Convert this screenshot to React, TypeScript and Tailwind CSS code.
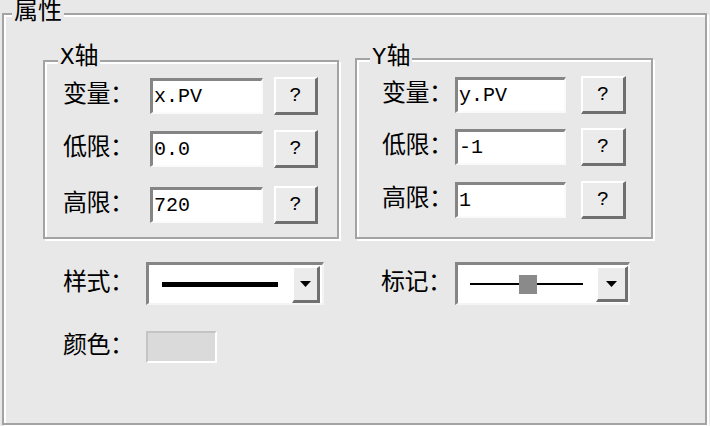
const font = "font-['Liberation_Mono','Noto_Sans_CJK_SC',monospace]";

function Etched({
  className,
  title,
  titleClass,
  children,
}: {
  className: string;
  title: string;
  titleClass: string;
  children?: React.ReactNode;
}) {
  return (
    <div
      className={`relative border-2 border-[#a3a3a3] shadow-[inset_2px_2px_0_#ffffff,2px_2px_0_#ffffff] ${className}`}
    >
      <span
        className={`absolute bg-[#e8e8e8] px-[2px] text-[24px] leading-[24px] text-black ${titleClass}`}
      >
        {title}
      </span>
      {children}
    </div>
  );
}

function Field({
  label,
  value,
  labelW,
  inputW,
  btnGap,
  btnW,
  className = "",
}: {
  label: string;
  value: string;
  labelW: string;
  inputW: string;
  btnGap: string;
  btnW: string;
  className?: string;
}) {
  return (
    <div className={`flex h-[38px] items-center ${className}`}>
      <div className={`flex shrink-0 items-center ${labelW}`}>
        <span className="text-[24px] leading-[26px] tracking-[-0.5px]">{label}</span>
      </div>
      <div
        className={`flex h-[36px] shrink-0 items-center border-t-[3px] border-l-[3px] border-b-2 border-r-2 border-t-[#858585] border-l-[#858585] border-b-[#fafafa] border-r-[#fafafa] bg-white pl-[1px] text-[20px] leading-[20px] ${inputW}`}
      >
        {value}
      </div>
      <button
        className={`flex h-[38px] shrink-0 items-center justify-center border-t-2 border-l-2 border-b-[3px] border-r-[3px] border-t-white border-l-white border-b-[#6f6f6f] border-r-[#6f6f6f] bg-[#ebebeb] text-[20px] leading-[20px] ${btnGap} ${btnW}`}
      >
        ?
      </button>
    </div>
  );
}

function DropButton({ className }: { className: string }) {
  return (
    <div
      className={`flex items-center justify-center border-t-2 border-l-2 border-b-[3px] border-r-[3px] border-t-white border-l-white border-b-[#707070] border-r-[#707070] bg-[#ebebeb] ${className}`}
    >
      <svg width="11" height="6" viewBox="0 0 11 6">
        <path d="M0 0H11L5.5 6Z" fill="#000" />
      </svg>
    </div>
  );
}

export default function App() {
  return (
    <div className={`h-[426px] w-[710px] overflow-hidden bg-[#e8e8e8] pl-[2px] pt-[13px] text-black ${font}`}>
      <Etched
        className="h-[412px] w-[705px]"
        title="属性"
        titleClass="left-[8px] top-[-15px] leading-[26px]"
      >
        <div className="flex items-end gap-[16px] pl-[39px] pt-[43px]">
          <Etched
            className="h-[179px] w-[296px] pl-[18px] pt-[15px]"
            title="X轴"
            titleClass="left-[13px] top-[-16px]"
          >
            <Field label="变量：" value="x.PV" labelW="w-[87px]" inputW="w-[113px]" btnGap="ml-[11px]" btnW="w-[44px]" />
            <Field label="低限：" value="0.0" labelW="w-[87px]" inputW="w-[113px]" btnGap="ml-[11px]" btnW="w-[44px]" className="mt-[15px]" />
            <Field label="高限：" value="720" labelW="w-[87px]" inputW="w-[113px]" btnGap="ml-[11px]" btnW="w-[44px]" className="mt-[18px]" />
          </Etched>
          <Etched
            className="h-[181px] w-[298px] pl-[25px] pt-[16px]"
            title="Y轴"
            titleClass="left-[13px] top-[-14px]"
          >
            <Field label="变量：" value="y.PV" labelW="w-[73px]" inputW="w-[111px]" btnGap="ml-[15px]" btnW="w-[45px]" />
            <Field label="低限：" value="-1" labelW="w-[73px]" inputW="w-[111px]" btnGap="ml-[15px]" btnW="w-[45px]" className="mt-[14px]" />
            <Field label="高限：" value="1" labelW="w-[73px]" inputW="w-[111px]" btnGap="ml-[15px]" btnW="w-[45px]" className="mt-[15px]" />
          </Etched>
        </div>

        <div className="flex flex-col pl-[59px] pt-[23px]">
          <div className="flex items-center">
            <span className="w-[83px] text-[24px] leading-[26px] tracking-[-0.5px]">样式：</span>
            <div className="flex h-[43px] w-[178px] items-center border-t-[3px] border-l-[3px] border-b-2 border-r-2 border-t-[#858585] border-l-[#858585] border-b-[#f4f4f4] border-r-[#f4f4f4] bg-white pl-[13px] pr-[2px]">
              <div className="h-[5px] w-[116px] bg-black" />
              <div className="flex-1" />
              <DropButton className="h-[37px] w-[28px]" />
            </div>
            <span className="ml-[57px] w-[74px] text-[24px] leading-[26px] tracking-[-0.5px]">标记：</span>
            <div className="flex h-[43px] w-[175px] items-center border-t-[3px] border-l-[3px] border-b-2 border-r-2 border-t-[#858585] border-l-[#858585] border-b-[#f4f4f4] border-r-[#f4f4f4] bg-white pl-[12px]">
              <div className="relative flex h-[19px] w-[113px] items-center">
                <div className="h-[2px] w-full bg-black" />
                <div className="absolute left-[49px] top-0 h-[19px] w-[18px] bg-[#8a8a8a]" />
              </div>
              <div className="flex-1" />
              <DropButton className="h-[36px] w-[32px]" />
            </div>
          </div>
          <div className="mt-[26px] flex items-center">
            <span className="w-[83px] text-[24px] leading-[26px] tracking-[-0.5px]">颜色：</span>
            <div className="h-[32px] w-[71px] border-2 border-t-[#c4c4c4] border-l-[#c4c4c4] border-b-white border-r-white bg-[#dadada]" />
          </div>
        </div>
      </Etched>
    </div>
  );
}
